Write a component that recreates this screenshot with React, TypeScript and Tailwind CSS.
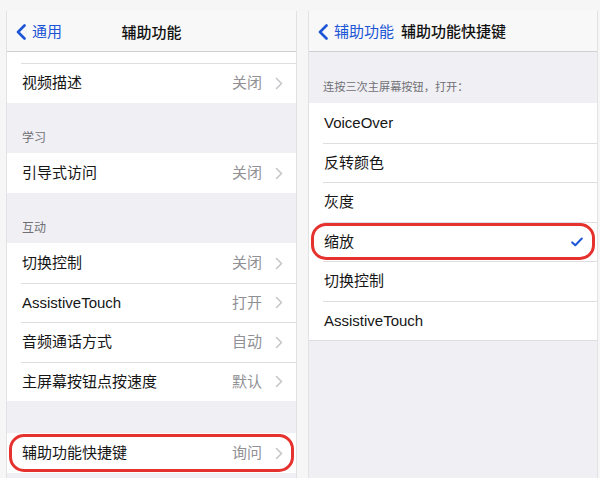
import React from 'react';

const font = "font-['Liberation_Sans','Noto_Sans_CJK_SC',sans-serif]";

const BackChevron: React.FC = () => (
  <svg width="12" height="16" viewBox="0 0 12 16" className="shrink-0">
    <path d="M9.5 1.5 L3 8 L9.5 14.5" fill="none" stroke="#1c56d6" strokeWidth="2.6" strokeLinecap="round" strokeLinejoin="round" />
  </svg>
);

const Chevron: React.FC = () => (
  <svg width="8" height="13" viewBox="0 0 8 13" className="shrink-0">
    <path d="M1.5 1.5 L6.5 6.5 L1.5 11.5" fill="none" stroke="#c4c4c9" strokeWidth="1.5" strokeLinecap="round" strokeLinejoin="round" />
  </svg>
);

const Check: React.FC = () => (
  <svg width="12" height="10" viewBox="0 0 12 10" className="shrink-0">
    <path d="M1.2 5.4 L4.3 8.3 L10.8 1.5" fill="none" stroke="#1c56d6" strokeWidth="2" strokeLinecap="round" strokeLinejoin="round" />
  </svg>
);

type RowProps = {
  label: string;
  value?: string;
  checked?: boolean;
  first?: boolean;
  circled?: boolean;
  tall?: boolean;
};

// one table cell, separator drawn along the top edge
const Row: React.FC<RowProps> = ({ label, value, checked, first, circled, tall }) => (
  <div className={`relative ${tall ? 'h-[40px]' : 'h-[39.5px]'} bg-white`}>
    {!first && <div className="absolute top-0 left-[14px] right-0 h-px bg-[#dedee2]" />}
    <div className="flex h-full items-center pl-[15px] pr-[13px] pt-[1px]">
      <span className="flex-1 text-[15px] text-[#161616]">{label}</span>
      {value && <span className="mr-[13px] text-[15px] text-[#909095]">{value}</span>}
      {value && <Chevron />}
      {checked && <span className="mr-[1px]"><Check /></span>}
    </div>
    {circled && (
      <div className="absolute inset-x-[2px] inset-y-[1px] rounded-[15px] border-[3px] border-[#e6322e]" />
    )}
  </div>
);

const NavBar: React.FC<{ back: string; title: string; centered?: boolean }> = ({ back, title, centered }) => (
  <div className="relative flex h-[41px] items-center border-b border-[#cfcfd3] bg-[#f8f8f8] pl-[8px] pt-[2px]">
    <BackChevron />
    <span className="ml-[5px] text-[15px] text-[#1c56d6]">{back}</span>
    {centered ? (
      <span className="absolute inset-x-0 top-[2px] flex h-full items-center justify-center text-[15px] font-medium text-[#111]">
        {title}
      </span>
    ) : (
      <span className="ml-[7px] text-[15px] font-medium text-[#111]">{title}</span>
    )}
  </div>
);

const SectionHeader: React.FC<{ text: string }> = ({ text }) => (
  <div className="flex h-[50px] items-end bg-[#efeff4] pb-[6px] pl-[15px] text-[12px] text-[#6f6f74]">{text}</div>
);

const App: React.FC = () => {
  return (
    <div className={`flex h-[478px] w-[600px] gap-[11px] overflow-hidden bg-[#f6f6f6] pl-[6px] pt-[11px] ${font}`}>
      {/* Left: 辅助功能 */}
      <div className="flex w-[291px] flex-col border-x border-[#e2e2e4] bg-[#efeff4]">
        <NavBar back="通用" title="辅助功能" centered />
        <div className="h-[11px] bg-white" />
        <Row label="视频描述" value="关闭" tall />
        <SectionHeader text="学习" />
        <Row label="引导式访问" value="关闭" first tall />
        <SectionHeader text="互动" />
        <Row label="切换控制" value="关闭" first />
        <Row label="AssistiveTouch" value="打开" />
        <Row label="音频通话方式" value="自动" />
        <Row label="主屏幕按钮点按速度" value="默认" />
        <div className="h-[32px] bg-[#efeff4]" />
        <Row label="辅助功能快捷键" value="询问" first circled tall />
        <div className="flex-1 bg-[#efeff4]" />
      </div>

      {/* Right: 辅助功能快捷键 */}
      <div className="flex w-[290px] flex-col border-x border-[#e2e2e4] bg-[#efeff4]">
        <NavBar back="辅助功能" title="辅助功能快捷键" />
        <div className="flex h-[51px] items-end bg-[#efeff4] pb-[7px] pl-[14px] text-[11.2px] text-[#6f6f74]">
          连按三次主屏幕按钮，打开：
        </div>
        <Row label="VoiceOver" first />
        <Row label="反转颜色" />
        <Row label="灰度" />
        <Row label="缩放" checked circled />
        <Row label="切换控制" />
        <Row label="AssistiveTouch" />
        <div className="flex-1 border-t border-[#dedee2] bg-[#efeff4]" />
      </div>
    </div>
  );
};

export default App;
